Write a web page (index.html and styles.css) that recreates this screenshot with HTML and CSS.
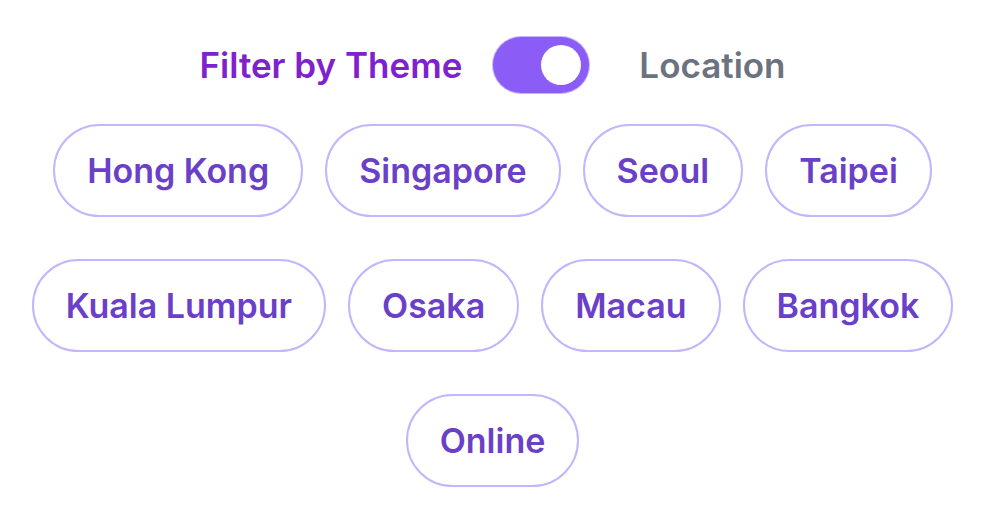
FILE: index.html
```html
<!DOCTYPE html>
<html lang="en">
<head>
<meta charset="utf-8">
<title>Filter</title>
<link rel="stylesheet" href="styles.css">
</head>
<body>
<div class="page">
  <div class="switcher">
    <span class="label label-active">Filter by Theme</span>
    <span class="toggle"><span class="knob"></span></span>
    <span class="label label-muted">Location</span>
  </div>
  <div class="pills">
    <button class="pill">Hong Kong</button>
    <button class="pill">Singapore</button>
    <button class="pill">Seoul</button>
    <button class="pill">Taipei</button>
    <button class="pill">Kuala Lumpur</button>
    <button class="pill">Osaka</button>
    <button class="pill">Macau</button>
    <button class="pill">Bangkok</button>
    <button class="pill">Online</button>
  </div>
</div>
</body>
</html>
```

FILE: styles.css
```css
* { box-sizing: border-box; }
html, body { margin: 0; padding: 0; background: #ffffff; }
body { font-family: Inter, "Noto Sans", sans-serif; }
.page {
  width: 982px;
  padding-top: 37px;
  padding-left: 3px;
  display: flex;
  flex-direction: column;
  align-items: center;
}
.switcher {
  display: flex;
  align-items: center;
  height: 56px;
}
.label {
  font-size: 35px;
  font-weight: 600;
  line-height: 42px;
}
.label-active { color: #7e22ce; margin-right: 31px; }
.label-muted { color: #6b7280; margin-left: 50px; }
.toggle {
  width: 96px;
  height: 56px;
  border-radius: 28px;
  background: #8b5cf6;
  box-shadow: 0 0 0 1px #c4b5fd;
  display: flex;
  align-items: center;
  justify-content: flex-end;
  padding-right: 8px;
}
.knob {
  width: 40px;
  height: 40px;
  border-radius: 50%;
  background: #ffffff;
}
.pills {
  margin-top: 31px;
  display: flex;
  flex-wrap: wrap;
  justify-content: center;
  column-gap: 22px;
  row-gap: 42px;
  width: 100%;
}
.pill {
  font-family: Inter, "Noto Sans", sans-serif;
  font-size: 34px;
  font-weight: 600;
  line-height: 48px;
  color: #6a40c8;
  background: #ffffff;
  border: 2px solid #c4b5fd;
  border-radius: 47px;
  padding: 20.5px 32px;
  margin: 0;
}
```
